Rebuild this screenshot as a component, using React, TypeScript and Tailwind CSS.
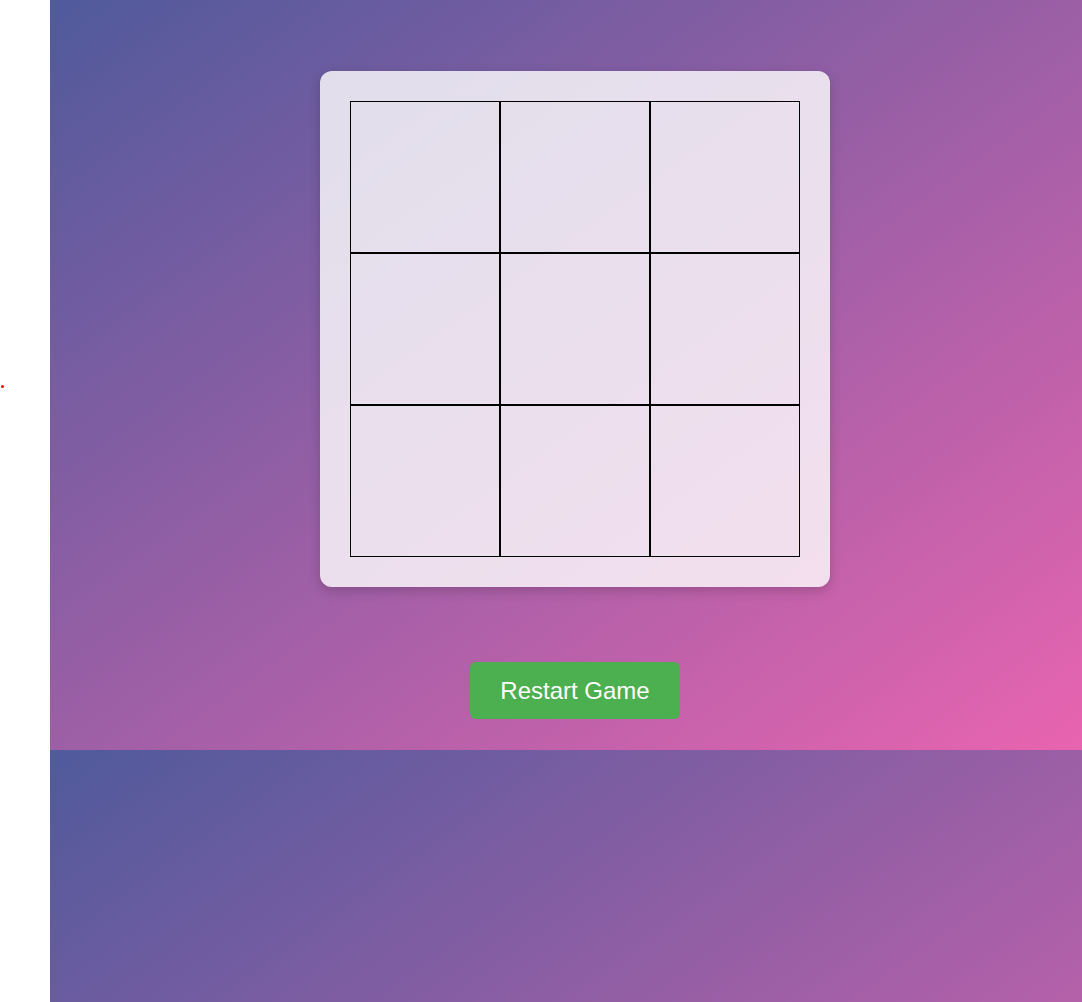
export default function App() {
  const cells = Array.from({ length: 9 }, (_, i) => i);

  return (
    <div className="relative h-[1002px] w-[1082px] overflow-hidden bg-white font-['Liberation_Sans',Arial,sans-serif]">
      {/* stray dot at the left edge */}
      <div className="absolute left-[1px] top-[385px] h-[3px] w-[3px] rounded-full bg-[#ff0000]" />

      <div className="ml-[50px] h-[1002px] w-[1050px] bg-[linear-gradient(to_bottom_right,#4f5a9c_0%,#ea64b0_100%)] bg-[length:100%_750px]">
        <div className="flex h-[750px] flex-col items-center pt-[71px]">
          <div className="rounded-xl bg-white/80 p-[30px] shadow-[0_4px_12px_rgba(0,0,0,0.18)]">
            <div className="grid grid-cols-[repeat(3,150px)]">
              {cells.map((i) => (
                <div key={i} className="h-[152px] w-[150px] border border-black" />
              ))}
            </div>
          </div>

          <button className="mt-[75px] h-[57px] w-[210px] rounded-md bg-[#4caf50] text-[24px] text-white">
            Restart Game
          </button>
        </div>
      </div>
    </div>
  );
}
